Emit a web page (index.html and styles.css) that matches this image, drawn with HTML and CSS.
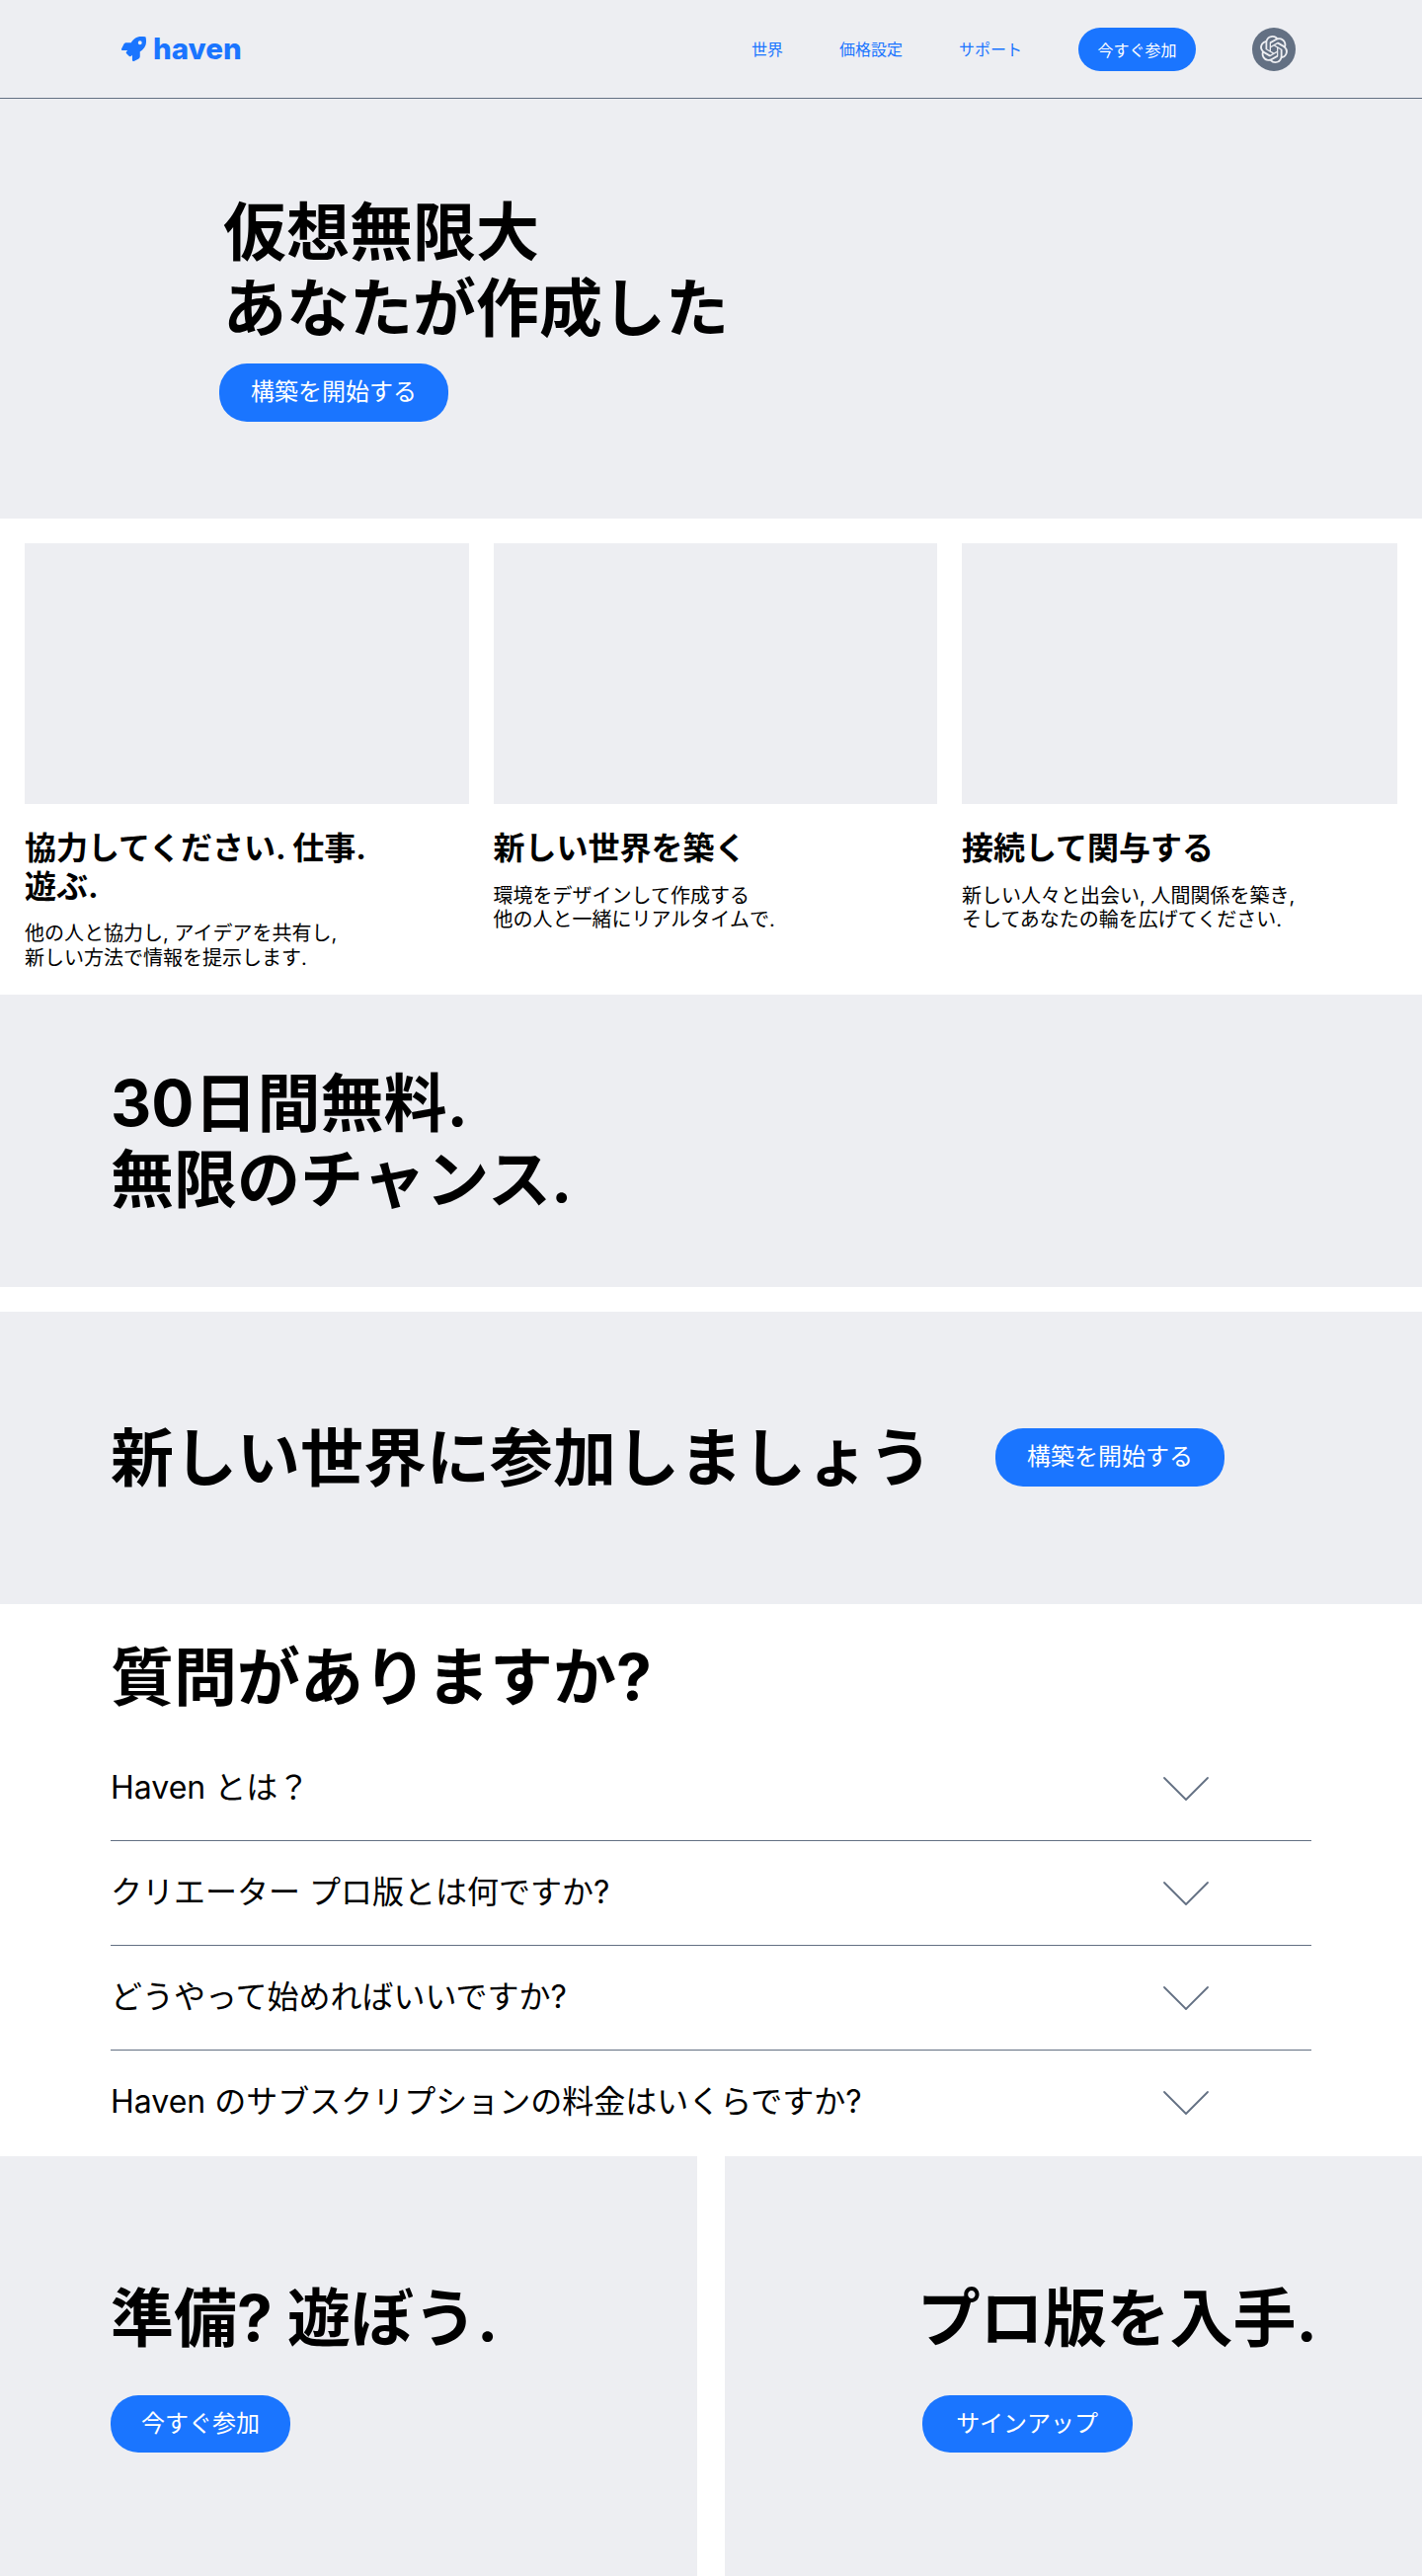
FILE: index.html
```html
<!DOCTYPE html>
<html lang="ja">
<head>
    <meta charset="UTF-8">
    <meta name="viewport" content="width=device-width, initial-scale=1.0">
    <title>haven</title>
    <link rel="stylesheet" href="styles.css">
</head>
<body>
    <header class="header">
        <a class="logo" href="#">
            <svg class="logo-icon" viewBox="0 0 512 512"><path fill="currentColor" d="M505.12 19.094c-1.19-5.531-6.658-11-12.207-12.188C460.716 0 435.507 0 410.407 0 307.175 0 245.269 55.203 199.052 128H94.838c-16.348.016-35.557 11.875-42.887 26.484L2.516 253.297A28.4 28.4 0 0 0 0 264a24.009 24.009 0 0 0 24.006 24h103.81l-22.474 22.469c-11.365 11.361-12.996 32.258 0 45.25l50.904 50.906c11.156 11.188 32.156 13.156 45.277 0l22.475-22.469V488a24.009 24.009 0 0 0 24.006 24 28.559 28.559 0 0 0 10.707-2.516l98.728-49.39c14.629-7.297 26.508-26.5 26.508-42.86V312.797c72.598-46.313 128.035-108.406 128.035-211.094.093-25.203.093-50.406-6.862-82.609zM384.04 168a40 40 0 1 1 40.01-40 40.023 40.023 0 0 1-40.01 40z"/></svg>
            <span>haven</span>
        </a>
        <nav class="nav">
            <a class="nav-link" href="#">世界</a>
            <a class="nav-link" href="#">価格設定</a>
            <a class="nav-link" href="#">サポート</a>
            <a class="button button-small" href="#">今すぐ参加</a>
            <a class="avatar" href="#">
                <svg viewBox="0 0 24 24"><path fill="currentColor" d="M22.2819 9.8211a5.9847 5.9847 0 0 0-.5157-4.9108 6.0462 6.0462 0 0 0-6.5098-2.9A6.0651 6.0651 0 0 0 4.9807 4.1818a5.9847 5.9847 0 0 0-3.9977 2.9 6.0462 6.0462 0 0 0 .7427 7.0966 5.98 5.98 0 0 0 .511 4.9107 6.051 6.051 0 0 0 6.5146 2.9001A5.9847 5.9847 0 0 0 13.2599 24a6.0557 6.0557 0 0 0 5.7718-4.2058 5.9894 5.9894 0 0 0 3.9977-2.9001 6.0557 6.0557 0 0 0-.7475-7.0729zm-9.022 12.6081a4.4755 4.4755 0 0 1-2.8764-1.0408l.1419-.0804 4.7783-2.7582a.7948.7948 0 0 0 .3927-.6813v-6.7369l2.02 1.1686a.071.071 0 0 1 .038.052v5.5826a4.504 4.504 0 0 1-4.4945 4.4944zm-9.6607-4.1254a4.4708 4.4708 0 0 1-.5346-3.0137l.142.0852 4.783 2.7582a.7712.7712 0 0 0 .7806 0l5.8428-3.3685v2.3324a.0804.0804 0 0 1-.0332.0615L9.74 19.9502a4.4992 4.4992 0 0 1-6.1408-1.6464zM2.3408 7.8956a4.485 4.485 0 0 1 2.3655-1.9728V11.6a.7664.7664 0 0 0 .3879.6765l5.8144 3.3543-2.0201 1.1685a.0757.0757 0 0 1-.071 0l-4.8303-2.7865A4.504 4.504 0 0 1 2.3408 7.872zm16.5963 3.8558L13.1038 8.364 15.1192 7.2a.0757.0757 0 0 1 .071 0l4.8303 2.7913a4.4944 4.4944 0 0 1-.6765 8.1042v-5.6772a.79.79 0 0 0-.407-.667zm2.0107-3.0231l-.142-.0852-4.7735-2.7818a.7759.7759 0 0 0-.7854 0L9.409 9.2297V6.8974a.0662.0662 0 0 1 .0284-.0615l4.8303-2.7866a4.4992 4.4992 0 0 1 6.6802 4.66zM8.3065 12.863l-2.02-1.1638a.0804.0804 0 0 1-.038-.0567V6.0742a4.4992 4.4992 0 0 1 7.3757-3.4537l-.142.0805L8.704 5.459a.7948.7948 0 0 0-.3927.6813zm1.0976-2.3654l2.602-1.4998 2.6069 1.4998v2.9994l-2.5974 1.4997-2.6067-1.4997Z"/></svg>
            </a>
        </nav>
    </header>

    <section class="hero">
        <h1>仮想無限大<br>あなたが作成した</h1>
        <a class="button" href="#">構築を開始する</a>
    </section>

    <section class="features">
        <div class="feature">
            <div class="feature-image"></div>
            <h3>協力してください. 仕事.<br>遊ぶ.</h3>
            <p>他の人と協力し, アイデアを共有し,<br>新しい方法で情報を提示します.</p>
        </div>
        <div class="feature">
            <div class="feature-image"></div>
            <h3>新しい世界を築く</h3>
            <p>環境をデザインして作成する<br>他の人と一緒にリアルタイムで.</p>
        </div>
        <div class="feature">
            <div class="feature-image"></div>
            <h3>接続して関与する</h3>
            <p>新しい人々と出会い, 人間関係を築き,<br>そしてあなたの輪を広げてください.</p>
        </div>
    </section>

    <section class="banner">
        <h2>30日間無料.<br>無限のチャンス.</h2>
    </section>

    <section class="banner">
        <h2>新しい世界に参加しましょう</h2>
        <a class="button" href="#">構築を開始する</a>
    </section>

    <section class="faq">
        <h2>質問がありますか?</h2>
        <div class="question">
            <span>Haven とは？</span>
            <svg class="chevron" viewBox="0 0 48 26"><path d="M2 2l22 22L46 2"/></svg>
        </div>
        <div class="question">
            <span>クリエーター プロ版とは何ですか?</span>
            <svg class="chevron" viewBox="0 0 48 26"><path d="M2 2l22 22L46 2"/></svg>
        </div>
        <div class="question">
            <span>どうやって始めればいいですか?</span>
            <svg class="chevron" viewBox="0 0 48 26"><path d="M2 2l22 22L46 2"/></svg>
        </div>
        <div class="question">
            <span>Haven のサブスクリプションの料金はいくらですか?</span>
            <svg class="chevron" viewBox="0 0 48 26"><path d="M2 2l22 22L46 2"/></svg>
        </div>
    </section>

    <section class="cta">
        <div class="cta-box">
            <div>
                <h2>準備? 遊ぼう.</h2>
                <a class="button button-join" href="#">今すぐ参加</a>
            </div>
        </div>
        <div class="cta-box cta-right">
            <div>
                <h2>プロ版を入手.</h2>
                <a class="button button-signup" href="#">サインアップ</a>
            </div>
        </div>
    </section>
</body>
</html>
```

FILE: styles.css
```css
* {
    box-sizing: border-box;
    margin: 0;
    padding: 0;
}

body {
    font-family: Inter, "Noto Sans CJK JP", sans-serif;
    line-height: 1.21;
    color: #000;
    background: #fff;
}

a {
    color: inherit;
    text-decoration: none;
}

h1,
h2 {
    font-size: 64px;
    line-height: 77px;
    font-weight: 700;
    white-space: nowrap;
}

/* Header */
.header {
    display: flex;
    align-items: center;
    justify-content: space-between;
    height: 100px;
    padding: 0 128px 0 123px;
    color: #1a75ff;
    background: #edeef2;
    border-bottom: 1px solid #637083;
}

.logo {
    display: flex;
    align-items: center;
    gap: 7px;
    font-size: 29.5px;
    font-weight: 800;
}

.logo span {
    padding-top: 1px;
}

.logo-icon {
    width: 25px;
    height: 25px;
}

.nav {
    display: flex;
    align-items: center;
    gap: 57px;
    font-size: 16px;
}

.nav-link {
    padding-top: 2px;
}

.button {
    display: inline-block;
    padding: 14px 32px 16px;
    font-size: 24px;
    line-height: 29px;
    color: #fff;
    background: #1a75ff;
    border-radius: 28px;
    white-space: nowrap;
}

.button-small {
    padding: 13px 19.5px 11px;
    font-size: 16px;
    line-height: 20px;
    border-radius: 22px;
}

.avatar {
    display: flex;
    align-items: center;
    justify-content: center;
    width: 44px;
    height: 44px;
    color: #edeef2;
    background: #637083;
    border-radius: 50%;
}

.avatar svg {
    width: 28px;
    height: 28px;
}

/* Hero */
.hero {
    display: flex;
    flex-direction: column;
    align-items: flex-start;
    justify-content: center;
    gap: 18px;
    height: 425px;
    padding: 0 0 2px 222px;
    background: #edeef2;
}

.hero h1 {
    padding-left: 4px;
}

/* Features */
.features {
    display: grid;
    grid-template-columns: 449.5px 449.5px 1fr;
    gap: 25px;
    padding: 25px;
}

.feature-image {
    height: 264px;
    margin-bottom: 26px;
    background: #edeef2;
}

.feature h3 {
    margin-bottom: 16px;
    font-size: 32px;
    font-weight: 700;
}

.feature p {
    font-size: 20px;
}

/* Banners */
.banner {
    display: flex;
    align-items: center;
    gap: 64px;
    height: 296px;
    padding-left: 112px;
    background: #edeef2;
}

.banner + .banner {
    margin-top: 25px;
}

/* FAQ */
.faq {
    height: 559px;
    padding: 35px 112px 0;
}

.faq h2 {
    margin-bottom: 22px;
}

.question {
    display: flex;
    align-items: center;
    justify-content: space-between;
    height: 106px;
    padding: 1px 103px 0 0;
    font-size: 32px;
    border-bottom: 1px solid #637083;
}

.question:last-child {
    border-bottom: 1px solid transparent;
}

.chevron {
    width: 48px;
    height: 26px;
    fill: none;
    stroke: #637083;
    stroke-width: 1.8;
    stroke-linecap: round;
    stroke-linejoin: round;
}

/* Bottom call to action */
.cta {
    display: grid;
    grid-template-columns: 1fr 1fr;
    gap: 28px;
    height: 425px;
}

.cta-box {
    display: flex;
    align-items: center;
    padding: 0 112px;
    background: #edeef2;
}

.cta-box h2 {
    margin-bottom: 40px;
}

.cta-right {
    justify-content: flex-end;
    padding-right: 106px;
}

.button-join,
.button-signup {
    display: block;
    width: fit-content;
    padding: 14.5px 31px;
}

.button-signup {
    margin-left: 5px;
    padding: 14.5px 34.5px;
}
```
